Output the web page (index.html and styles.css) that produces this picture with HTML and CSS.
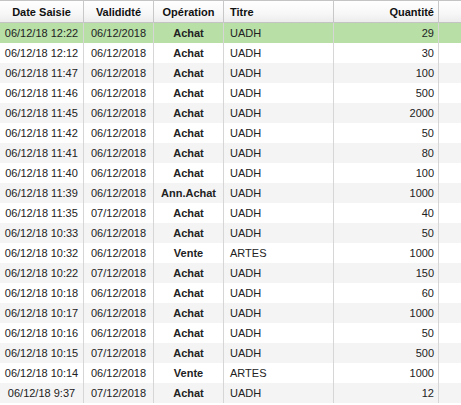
FILE: index.html
```html
<!DOCTYPE html>
<html>
<head>
<meta charset="utf-8">
<link rel="stylesheet" href="styles.css">
</head>
<body>
<table class="grid">
  <colgroup>
    <col class="c-date"><col class="c-val"><col class="c-op"><col class="c-titre"><col class="c-qte"><col class="c-pad">
  </colgroup>
  <thead>
    <tr>
      <th class="center">Date Saisie</th>
      <th class="center">Valididté</th>
      <th class="center">Opération</th>
      <th class="left">Titre</th>
      <th class="right">Quantité</th>
      <th class="pad"></th>
    </tr>
  </thead>
  <tbody>
    <tr class="sel"><td>06/12/18 12:22</td><td>06/12/2018</td><td class="op">Achat</td><td class="left">UADH</td><td class="right">29</td><td class="pad"></td></tr>
    <tr><td>06/12/18 12:12</td><td>06/12/2018</td><td class="op">Achat</td><td class="left">UADH</td><td class="right">30</td><td class="pad"></td></tr>
    <tr><td>06/12/18 11:47</td><td>06/12/2018</td><td class="op">Achat</td><td class="left">UADH</td><td class="right">100</td><td class="pad"></td></tr>
    <tr><td>06/12/18 11:46</td><td>06/12/2018</td><td class="op">Achat</td><td class="left">UADH</td><td class="right">500</td><td class="pad"></td></tr>
    <tr><td>06/12/18 11:45</td><td>06/12/2018</td><td class="op">Achat</td><td class="left">UADH</td><td class="right">2000</td><td class="pad"></td></tr>
    <tr><td>06/12/18 11:42</td><td>06/12/2018</td><td class="op">Achat</td><td class="left">UADH</td><td class="right">50</td><td class="pad"></td></tr>
    <tr><td>06/12/18 11:41</td><td>06/12/2018</td><td class="op">Achat</td><td class="left">UADH</td><td class="right">80</td><td class="pad"></td></tr>
    <tr><td>06/12/18 11:40</td><td>06/12/2018</td><td class="op">Achat</td><td class="left">UADH</td><td class="right">100</td><td class="pad"></td></tr>
    <tr><td>06/12/18 11:39</td><td>06/12/2018</td><td class="op">Ann.Achat</td><td class="left">UADH</td><td class="right">1000</td><td class="pad"></td></tr>
    <tr><td>06/12/18 11:35</td><td>07/12/2018</td><td class="op">Achat</td><td class="left">UADH</td><td class="right">40</td><td class="pad"></td></tr>
    <tr><td>06/12/18 10:33</td><td>06/12/2018</td><td class="op">Achat</td><td class="left">UADH</td><td class="right">50</td><td class="pad"></td></tr>
    <tr><td>06/12/18 10:32</td><td>06/12/2018</td><td class="op">Vente</td><td class="left">ARTES</td><td class="right">1000</td><td class="pad"></td></tr>
    <tr><td>06/12/18 10:22</td><td>07/12/2018</td><td class="op">Achat</td><td class="left">UADH</td><td class="right">150</td><td class="pad"></td></tr>
    <tr><td>06/12/18 10:18</td><td>06/12/2018</td><td class="op">Achat</td><td class="left">UADH</td><td class="right">60</td><td class="pad"></td></tr>
    <tr><td>06/12/18 10:17</td><td>06/12/2018</td><td class="op">Achat</td><td class="left">UADH</td><td class="right">1000</td><td class="pad"></td></tr>
    <tr><td>06/12/18 10:16</td><td>06/12/2018</td><td class="op">Achat</td><td class="left">UADH</td><td class="right">50</td><td class="pad"></td></tr>
    <tr><td>06/12/18 10:15</td><td>07/12/2018</td><td class="op">Achat</td><td class="left">UADH</td><td class="right">500</td><td class="pad"></td></tr>
    <tr><td>06/12/18 10:14</td><td>06/12/2018</td><td class="op">Vente</td><td class="left">ARTES</td><td class="right">1000</td><td class="pad"></td></tr>
    <tr><td>06/12/18 9:37</td><td>07/12/2018</td><td class="op">Achat</td><td class="left">UADH</td><td class="right">12</td><td class="pad"></td></tr>
  </tbody>
</table>
</body>
</html>
```
FILE: styles.css
```css
html, body {
  margin: 0;
  padding: 0;
  background: #ffffff;
}
.grid {
  border-collapse: separate;
  border-spacing: 0;
  table-layout: fixed;
  width: 461px;
  font-family: "Liberation Sans", Arial, sans-serif;
  font-size: 11px;
  color: #222222;
}
.c-date { width: 84px; }
.c-val { width: 70px; }
.c-op { width: 70px; }
.c-titre { width: 110px; }
.c-qte { width: 105px; }
.c-pad { width: 22px; }

.grid th {
  height: 21px;
  padding: 0 4px;
  box-sizing: border-box;
  font-weight: bold;
  color: #111111;
  background: linear-gradient(to bottom, #ffffff 0%, #f7f7f7 60%, #ececec 100%);
  border-top: 1px solid #c4c4c4;
  border-bottom: 1px solid #c4c4c4;
  border-right: 1px solid #c8c8c8;
  white-space: nowrap;
  overflow: hidden;
}
.grid thead tr th {
  height: 23px;
}
.grid td {
  height: 20px;
  padding: 0 4px;
  box-sizing: border-box;
  text-align: center;
  border-right: 1px solid #d6d6d6;
  white-space: nowrap;
  overflow: hidden;
}
.grid th.pad, .grid td.pad {
  border-right: none;
}
.grid tbody tr:nth-child(odd) td {
  background: #f4f4f4;
}
.grid tbody tr:nth-child(even) td {
  background: #ffffff;
}
.grid tbody tr.sel td {
  background: #b7dfa6;
}
.center { text-align: center; }
.grid .left { text-align: left; padding-left: 6px; }
.grid .right { text-align: right; padding-right: 4px; }
.grid td.op { font-weight: bold; }
```
